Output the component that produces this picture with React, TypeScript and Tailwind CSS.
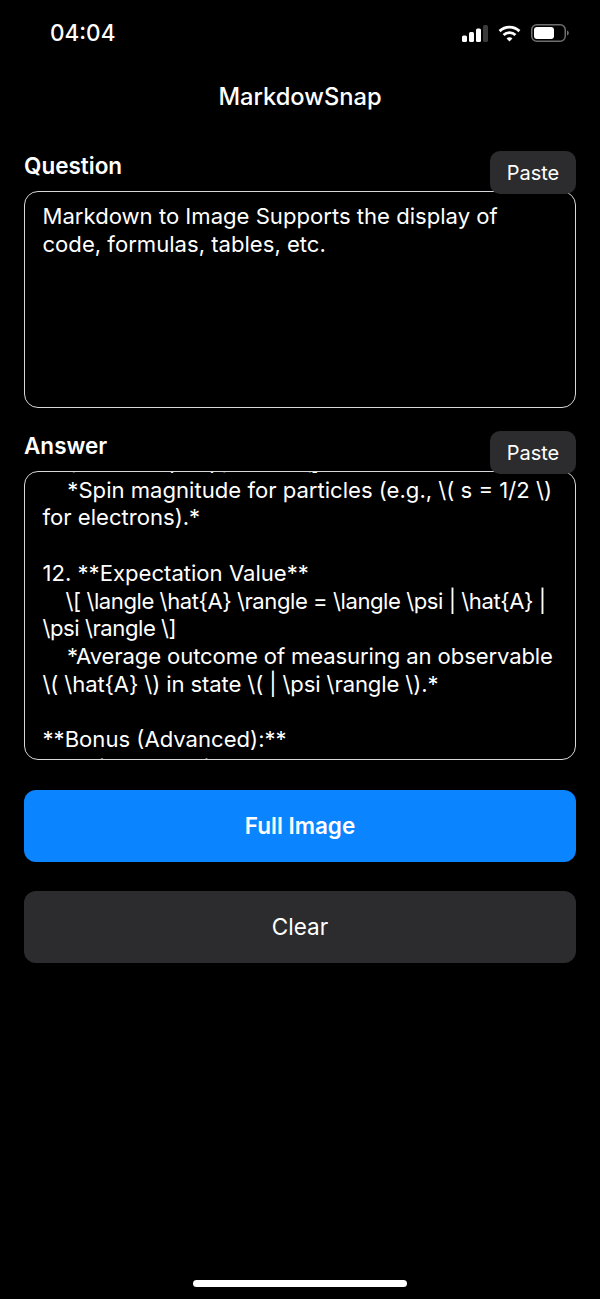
import { type ReactNode } from "react";

const font = { fontFamily: "Inter, 'Liberation Sans', sans-serif" };

function SignalIcon() {
  return (
    <svg width="26" height="17" viewBox="0 0 26 17">
      <rect x="0" y="10.5" width="5" height="6.5" rx="1.5" fill="#fff" />
      <rect x="7" y="7" width="5" height="10" rx="1.5" fill="#fff" />
      <rect x="14" y="3.5" width="5" height="13.5" rx="1.5" fill="#fff" />
      <rect x="21" y="0" width="5" height="17" rx="1.5" fill="#3a3a3c" />
    </svg>
  );
}

function WifiIcon() {
  return (
    <svg width="23" height="17" viewBox="0 0 24 18" fill="none" stroke="#fff" strokeWidth="3">
      <path d="M1.5 6.5 C7.5 0.8 16.5 0.8 22.5 6.5" />
      <path d="M5.7 10.6 C9.3 7.3 14.7 7.3 18.3 10.6" />
      <path d="M12 17.5 L8.9 14.2 C10.7 12.7 13.3 12.7 15.1 14.2 Z" fill="#fff" stroke="none" />
    </svg>
  );
}

function BatteryIcon() {
  return (
    <svg width="38" height="18" viewBox="0 0 38 18">
      <rect x="0.75" y="0.75" width="33.5" height="16.5" rx="5" fill="none" stroke="#6e6e70" strokeWidth="1.5" />
      <rect x="3" y="3" width="20" height="12" rx="3" fill="#fff" />
      <path d="M36 6.5 C37.2 7 37.8 8 37.8 9 C37.8 10 37.2 11 36 11.5 Z" fill="#6e6e70" />
    </svg>
  );
}

function Field({ label, height, children }: { label: string; height: string; children: ReactNode }) {
  return (
    <section className="relative">
      <h2 className="h-[39px] text-[22.5px] leading-[28px] font-semibold text-white">{label}</h2>
      <button className="absolute right-0 top-[-1px] z-10 w-[86px] h-[43px] rounded-[10px] bg-[#2c2c2e] text-[20px] text-white">
        Paste
      </button>
      <div className={`${height} overflow-hidden rounded-[14px] border-[1.5px] border-[#d8d8da] pl-[17.5px] pr-[18px] text-[22.1px] leading-[27.7px] text-white whitespace-pre-wrap`}>
        {children}
      </div>
    </section>
  );
}

export default function App() {
  return (
    <div className="w-[600px] h-[1299px] bg-black flex flex-col" style={font}>
      <header className="h-[66px] flex items-center justify-between pl-[50px] pr-[31px]">
        <span className="text-[22.5px] font-medium text-white">04:04</span>
        <div className="flex items-center gap-[10px]">
          <SignalIcon />
          <WifiIcon />
          <BatteryIcon />
        </div>
      </header>

      <h1 className="h-[86px] pt-[16px] text-center text-[23.7px] leading-[30px] font-medium text-white">MarkdowSnap</h1>

      <main className="flex flex-col px-6">
        <Field label="Question" height="h-[217px]">
          <p className="pt-[11px]">Markdown to Image Supports the display of code, formulas, tables, etc.</p>
        </Field>

        <div className="mt-[24px]">
          <Field label="Answer" height="h-[289px]">
            <div className="mt-[-23px]">
              <p>{`    \\[ S^2 = s(s+1)\\hbar^2 \\]`}</p>
              <p>{`    *Spin magnitude for particles (e.g., \\( s = 1/2 \\) for electrons).*`}</p>
              <p>{`\u00a0`}</p>
              <p>{`12. **Expectation Value**`}</p>
              <p className="tracking-[-0.45px]">{`    \\[ \\langle \\hat{A} \\rangle = \\langle \\psi | \\hat{A} | \\psi \\rangle \\]`}</p>
              <p className="tracking-[-0.12px]">{`    *Average outcome of measuring an observable \\( \\hat{A} \\) in state \\( | \\psi \\rangle \\).*`}</p>
              <p>{`\u00a0`}</p>
              <p>{`**Bonus (Advanced):**`}</p>
              <p>{`   **Dirac Equation**`}</p>
            </div>
          </Field>
        </div>

        <button className="mt-[30px] h-[72px] rounded-[12px] bg-[#0a84ff] text-[22.5px] font-semibold text-white">Full Image</button>
        <button className="mt-[29px] h-[72px] rounded-[12px] bg-[#2c2c2e] text-[22.5px] text-white">Clear</button>
      </main>

      <footer className="mt-auto flex justify-center pb-[12px]">
        <div className="w-[214px] h-[7px] rounded-full bg-white" />
      </footer>
    </div>
  );
}
